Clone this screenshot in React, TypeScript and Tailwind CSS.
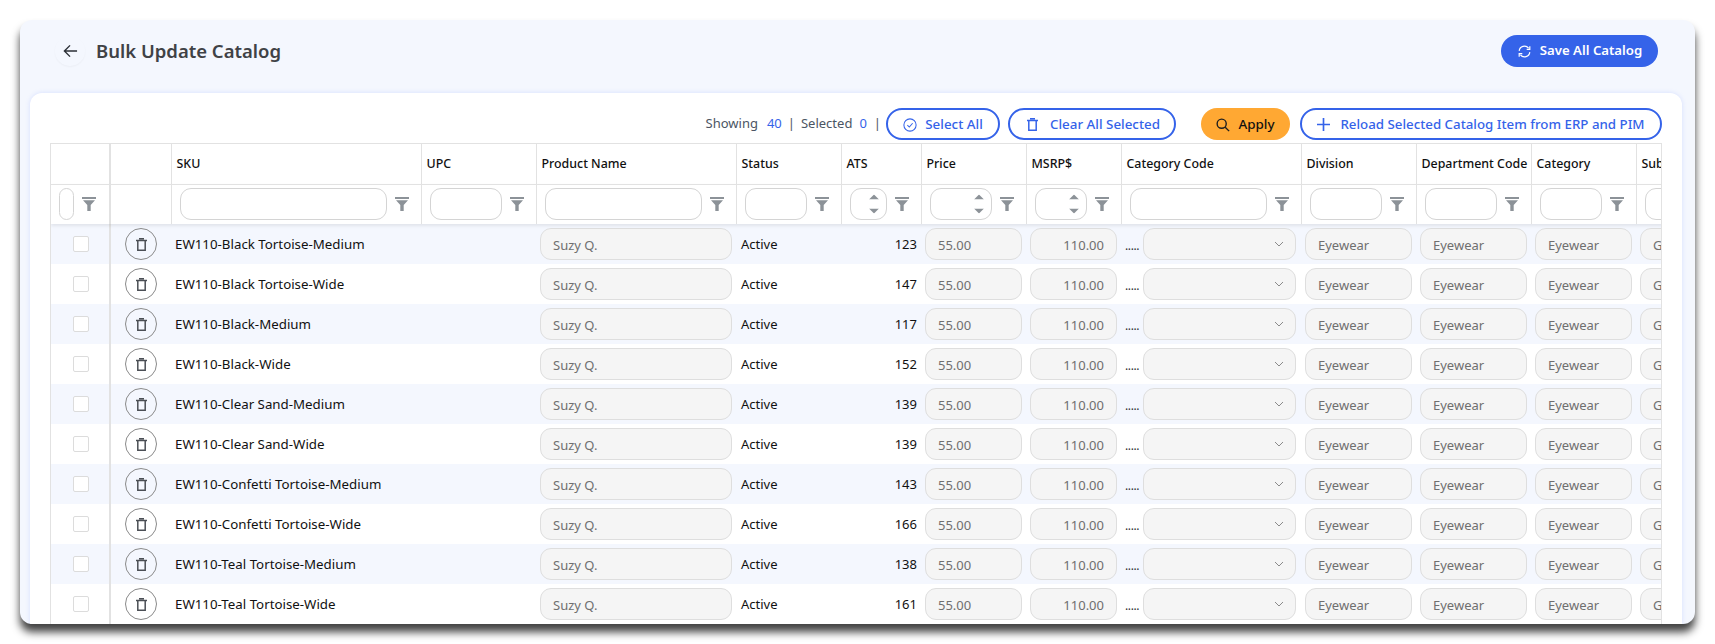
import React from "react";

const Funnel = () => (
  <svg viewBox="0 0 14 14" className="w-[14px] h-[14px] shrink-0" fill="#8c9298">
    <rect x="0" y="0" width="14" height="2" />
    <path d="M1 3.2h12L8.7 8v6H5.3V8z" />
  </svg>
);

const Trash = ({ c = "#4b4f55" }: { c?: string }) => (
  <svg viewBox="0 0 11 13" className="w-[11px] h-[13px]" fill="none" stroke={c} strokeWidth="1.5">
    <path d="M0 2.5h11M3 0.8h5" />
    <path d="M1.8 2.5V12.2h7.4V2.5" />
  </svg>
);

const Spin = () => (
  <div className="flex flex-col items-center gap-[9px] absolute right-[7px] top-1/2 -translate-y-1/2">
    <svg viewBox="0 0 10 5" className="w-[10px] h-[5px]" fill="#8c9298"><path d="M5 0l5 5H0z" /></svg>
    <svg viewBox="0 0 10 5" className="w-[10px] h-[5px]" fill="#8c9298"><path d="M5 5L0 0h10z" /></svg>
  </div>
);

const cols = [
  { name: "", w: 59 },
  { name: "", w: 61 },
  { name: "SKU", w: 250 },
  { name: "UPC", w: 115 },
  { name: "Product Name", w: 200 },
  { name: "Status", w: 105 },
  { name: "ATS", w: 80 },
  { name: "Price", w: 105 },
  { name: "MSRP$", w: 95 },
  { name: "Category Code", w: 180 },
  { name: "Division", w: 115 },
  { name: "Department Code", w: 115 },
  { name: "Category", w: 105 },
  { name: "Sub Category", w: 115 },
];

const rows = [
  ["EW110-Black Tortoise-Medium", 123],
  ["EW110-Black Tortoise-Wide", 147],
  ["EW110-Black-Medium", 117],
  ["EW110-Black-Wide", 152],
  ["EW110-Clear Sand-Medium", 139],
  ["EW110-Clear Sand-Wide", 139],
  ["EW110-Confetti Tortoise-Medium", 143],
  ["EW110-Confetti Tortoise-Wide", 166],
  ["EW110-Teal Tortoise-Medium", 138],
  ["EW110-Teal Tortoise-Wide", 161],
] as const;

const Pill = ({ children, right, w }: { children?: React.ReactNode; right?: boolean; w: string }) => (
  <div
    className={`${w} h-[32px] rounded-[11px] border border-[#dedede] bg-[#f5f5f5] flex items-center px-[12px] pt-[3px] text-[13px] text-[#6f6f6f] overflow-hidden whitespace-nowrap ${right ? "justify-end" : ""}`}
  >
    {children}
  </div>
);

const FilterCell = ({ w, number }: { w: string; number?: boolean }) => (
  <td className="h-[40px] p-0 border-r border-[#e2e2e2]">
    <div className="flex items-center gap-[8px] pl-[8px]">
      <div className={`${w} relative h-[32px] rounded-[11px] border border-[#d4d4d4] bg-white shrink-0`}>
        {number && <Spin />}
      </div>
      <Funnel />
    </div>
  </td>
);

export default function App() {
  return (
    <div className="bg-white p-[20px] h-[644px] font-['Noto_Sans',sans-serif]">
      <div className="h-[604px] rounded-[12px] bg-[#f4f7fe] overflow-hidden shadow-[0_8px_8px_rgba(0,0,0,0.75)] flex flex-col pl-[10px] pr-[13px]">
        <div className="h-[62px] mb-[11px] shrink-0 flex items-center justify-between pl-[25px] pr-[24px]">
          <div className="flex items-center gap-[11px]">
            <div className="w-[30px] h-[30px] rounded-full flex items-center justify-center shadow-[0_1px_2px_rgba(0,0,0,0.04)]">
              <svg viewBox="0 0 16 14" className="w-[15px] h-[14px]" fill="none" stroke="#2b2f36" strokeWidth="1.5">
                <path d="M15 7H1.5M7.5 1L1.5 7l6 6" />
              </svg>
            </div>
            <h1 className="text-[18.5px] font-semibold text-[#3f4246] leading-none">Bulk Update Catalog</h1>
          </div>
          <button className="h-[32px] w-[157px] rounded-full bg-[#3563e9] text-white text-[13.2px] font-semibold flex items-center justify-center gap-[8px]">
            <svg viewBox="0 0 24 24" className="w-[15px] h-[15px]" fill="none" stroke="#fff" strokeWidth="1.9">
              <path d="M3.5 11A8.5 8.5 0 0 1 18.5 6.5M20.5 3.5V8.5H15.5" />
              <path d="M20.5 13A8.5 8.5 0 0 1 5.5 17.5M3.5 20.5V15.5H8.5" />
            </svg>
            Save All Catalog
          </button>
        </div>
        <div className="flex-1 rounded-t-[12px] bg-white px-[20px] pt-[15px] min-h-0 overflow-hidden shadow-[0_0_5px_rgba(100,130,255,0.2)]">
          <div className="h-[35px] flex items-start justify-end text-[13px]">
            <span className="text-[#4b5563] mt-[6px]">Showing</span>
            <span className="text-[#3563e9] ml-[9px] mt-[6px]">40</span>
            <span className="text-[#4b5563] ml-[6px] mt-[6px]">|</span>
            <span className="text-[#4b5563] ml-[6px] mt-[6px]">Selected</span>
            <span className="text-[#3563e9] ml-[7px] mt-[6px]">0</span>
            <span className="text-[#4b5563] ml-[7px] mt-[6px]">|</span>
            <button className="ml-[5px] w-[114px] h-[32px] pt-[1px] rounded-full border-2 border-[#3563e9] text-[#3563e9] text-[13.4px] font-medium flex items-center justify-center gap-[8px]">
              <svg viewBox="0 0 16 16" className="w-[14px] h-[14px]" fill="none" stroke="#3563e9" strokeWidth="1.2">
                <circle cx="8" cy="8" r="7" />
                <path d="M5 8.2l2.2 2.2L11 6" />
              </svg>
              Select All
            </button>
            <button className="ml-[8px] w-[168px] h-[32px] pt-[1px] pl-[3px] rounded-full border-2 border-[#3563e9] text-[#3563e9] text-[13.4px] font-medium flex items-center justify-center gap-[12px]">
              <Trash c="#3563e9" />
              Clear All Selected
            </button>
            <button className="ml-[25px] w-[89px] h-[32px] pt-[1px] rounded-full bg-[#ffa833] text-[#111111] text-[13.4px] font-medium flex items-center justify-center gap-[8px]">
              <svg viewBox="0 0 16 16" className="w-[14px] h-[14px]" fill="none" stroke="#1f1f1f" strokeWidth="1.6">
                <circle cx="6.5" cy="6.5" r="5.2" />
                <path d="M10.5 10.5L15 15" />
              </svg>
              Apply
            </button>
            <button className="ml-[10px] w-[362px] h-[32px] pt-[1px] rounded-full border-2 border-[#3563e9] text-[#3563e9] text-[13.3px] font-medium flex items-center justify-center gap-[10px]">
              <svg viewBox="0 0 14 14" className="w-[13px] h-[13px]" fill="none" stroke="#3563e9" strokeWidth="1.8">
                <path d="M7 0v14M0 7h14" />
              </svg>
              Reload Selected Catalog Item from ERP and PIM
            </button>
          </div>
          <div className="overflow-hidden border-t border-l border-r border-[#e2e2e2] w-[1612px]">
            <table className="table-fixed border-collapse text-[13px] w-[1622px]">
              <colgroup>
                {cols.map((c, i) => (
                  <col key={i} style={{ width: c.w }} />
                ))}
              </colgroup>
              <thead>
                <tr className="h-[40px] border-b border-[#e2e2e2]">
                  {cols.map((c, i) => (
                    <th
                      key={i}
                      className={`p-0 pl-[5px] pt-[2px] text-left text-[12.4px] font-medium text-[#111111] whitespace-nowrap overflow-hidden ${i === 0 ? "border-r-[2px] border-[#e2e2e2]" : "border-r border-[#e2e2e2]"}`}
                    >
                      {c.name}
                    </th>
                  ))}
                </tr>
                <tr className="shadow-[0_2px_3px_rgba(0,0,0,0.08)] relative">
                  <td className="h-[40px] p-0 border-r-[2px] border-[#e2e2e2]">
                    <div className="flex items-center gap-[8px] pl-[8px]">
                      <div className="w-[15px] h-[32px] rounded-[8px] border border-[#d4d4d4]" />
                      <Funnel />
                    </div>
                  </td>
                  <td className="p-0 border-r border-[#e2e2e2]" />
                  <FilterCell w="w-[207px]" />
                  <FilterCell w="w-[72px]" />
                  <FilterCell w="w-[157px]" />
                  <FilterCell w="w-[62px]" />
                  <FilterCell w="w-[37px]" number />
                  <FilterCell w="w-[62px]" number />
                  <FilterCell w="w-[52px]" number />
                  <FilterCell w="w-[137px]" />
                  <FilterCell w="w-[72px]" />
                  <FilterCell w="w-[72px]" />
                  <FilterCell w="w-[62px]" />
                  <FilterCell w="w-[72px]" />
                </tr>
              </thead>
              <tbody>
                {rows.map(([sku, ats], i) => (
                  <tr key={sku} className={`h-[40px] ${i % 2 === 0 ? "bg-[#f4f7fe]" : "bg-white"}`}>
                    <td className="p-0 border-r-[2px] border-[#e2e2e2]">
                      <div className="w-[16px] h-[16px] mr-[20px] ml-auto rounded-[2px] border border-[#dcdcdc] bg-white" />
                    </td>
                    <td className="p-0">
                      <div className="w-[32px] h-[32px] rounded-full border border-[#8a8a8a] flex items-center justify-center ml-[14px]">
                        <Trash />
                      </div>
                    </td>
                    <td className="p-0 pl-[4px] pt-[1px] whitespace-nowrap text-[13.3px] text-[#111111]">{sku}</td>
                    <td className="p-0" />
                    <td className="p-0 pl-[4px]"><Pill w="w-[192px]">Suzy Q.</Pill></td>
                    <td className="p-0 pl-[5px] pt-[1px] text-[#111111]">Active</td>
                    <td className="p-0 pr-[4px] pt-[1px] text-right text-[#111111]">{ats}</td>
                    <td className="p-0 pl-[4px]"><Pill w="w-[97px]">55.00</Pill></td>
                    <td className="p-0 pl-[4px]"><Pill w="w-[87px]" right>110.00</Pill></td>
                    <td className="p-0 pl-[4px]">
                      <div className="flex items-center">
                        <span className="w-[18px] text-[#333333] text-[12px] tracking-[-0.4px] pt-[3px]">.....</span>
                        <div className="w-[153px] h-[32px] rounded-[11px] border border-[#dedede] bg-[#f5f5f5] flex items-center justify-end pr-[11px]">
                          <svg viewBox="0 0 10 6" className="w-[10px] h-[6px]" fill="none" stroke="#8a8a8a" strokeWidth="1">
                            <path d="M1 1l4 4 4-4" />
                          </svg>
                        </div>
                      </div>
                    </td>
                    <td className="p-0 pl-[4px]"><Pill w="w-[107px]">Eyewear</Pill></td>
                    <td className="p-0 pl-[4px]"><Pill w="w-[107px]">Eyewear</Pill></td>
                    <td className="p-0 pl-[4px]"><Pill w="w-[97px]">Eyewear</Pill></td>
                    <td className="p-0 pl-[4px]"><Pill w="w-[107px]">General</Pill></td>
                  </tr>
                ))}
              </tbody>
            </table>
          </div>
        </div>
      </div>
    </div>
  );
}
